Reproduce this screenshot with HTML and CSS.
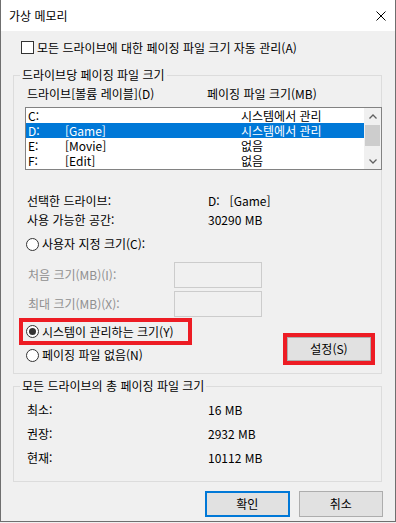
FILE: index.html
```html
<!DOCTYPE html>
<html lang="ko">
<head>
<meta charset="utf-8">
<title>가상 메모리</title>
<link rel="stylesheet" href="styles.css">
</head>
<body>
<div class="window">
  <div class="titlebar">
    <span class="title">가상 메모리</span>
    <svg class="close" width="10" height="10" viewBox="0 0 10 10"><path d="M0.5 0.5L9.5 9.5M9.5 0.5L0.5 9.5" stroke="#000" stroke-width="1" fill="none"/></svg>
  </div>
  <div class="content">
    <div class="check-row"><span class="checkbox"></span><span class="check-label">모든 드라이브에 대한 페이징 파일 크기 자동 관리(A)</span></div>

    <fieldset class="group group-drive">
      <legend>드라이브당 페이징 파일 크기</legend>
      <div class="col-head"><span class="col-drive-h">드라이브[볼륨 레이블](D)</span><span>페이징 파일 크기(MB)</span></div>
      <div class="listbox">
        <div class="rows">
          <div class="row"><span class="c-letter">C:</span><span class="c-label"></span><span class="c-size">시스템에서 관리</span></div>
          <div class="row selected"><span class="c-letter">D:</span><span class="c-label">[Game]</span><span class="c-size">시스템에서 관리</span></div>
          <div class="row"><span class="c-letter">E:</span><span class="c-label">[Movie]</span><span class="c-size">없음</span></div>
          <div class="row"><span class="c-letter">F:</span><span class="c-label">[Edit]</span><span class="c-size">없음</span></div>
        </div>
        <div class="scrollbar">
          <div class="sb-btn"><svg width="8" height="5" viewBox="0 0 8 5"><path d="M0.5 4.5L4 1L7.5 4.5" stroke="#606060" stroke-width="1.3" fill="none"/></svg></div>
          <div class="sb-thumb"></div>
          <div class="sb-space"></div>
          <div class="sb-btn"><svg width="8" height="5" viewBox="0 0 8 5"><path d="M0.5 0.5L4 4L7.5 0.5" stroke="#606060" stroke-width="1.3" fill="none"/></svg></div>
        </div>
      </div>

      <div class="info-row first"><span class="info-label">선택한 드라이브:</span><span>D:</span><span class="vol">[Game]</span></div>
      <div class="info-row"><span class="info-label">사용 가능한 공간:</span><span>30290 MB</span></div>

      <div class="radio-row custom"><span class="radio"></span><span class="radio-label">사용자 지정 크기(C):</span></div>

      <div class="size-row first"><span class="size-label">처음 크기(MB)(I):</span><span class="size-input"></span></div>
      <div class="size-row"><span class="size-label">최대 크기(MB)(X):</span><span class="size-input"></span></div>

      <div class="bottom-row">
        <div class="radio-col">
          <div class="radio-row highlight"><span class="radio checked"></span><span class="radio-label">시스템이 관리하는 크기(Y)</span></div>
          <div class="radio-row none"><span class="radio"></span><span class="radio-label">페이징 파일 없음(N)</span></div>
        </div>
        <div class="set-wrap"><button class="btn set-btn">설정(S)</button></div>
      </div>
    </fieldset>

    <fieldset class="group group-total">
      <legend>모든 드라이브의 총 페이징 파일 크기</legend>
      <div class="total-row first"><span class="info-label">최소:</span><span>16 MB</span></div>
      <div class="total-row"><span class="info-label">권장:</span><span>2932 MB</span></div>
      <div class="total-row"><span class="info-label">현재:</span><span>10112 MB</span></div>
    </fieldset>

    <div class="buttons">
      <button class="btn ok-btn">확인</button>
      <button class="btn">취소</button>
    </div>
  </div>
</div>
</body>
</html>
```

FILE: styles.css
```css
* { box-sizing: border-box; }
html, body { margin: 0; padding: 0; background: #f0f0f0; }
body {
  font-family: "Noto Sans CJK KR", "Noto Sans", sans-serif;
  font-size: 12px;
  line-height: 16px;
  color: #000;
}
.window {
  width: 396px;
  height: 522px;
  background: #f0f0f0;
  border: 1px solid #6f6f6f;
  border-top: none;
  display: flex;
  flex-direction: column;
}
.titlebar {
  height: 31px;
  flex: none;
  background: #fff;
  display: flex;
  align-items: center;
  justify-content: space-between;
  padding: 0 9px 0 8px;
}
.title { font-size: 12px; }
.close { display: block; }

.content { padding: 0 12px; }

.check-row {
  margin-top: 9px;
  height: 15px;
  display: flex;
  align-items: center;
}
.checkbox {
  width: 13px;
  height: 13px;
  margin-left: 8px;
  border: 1px solid #333;
  background: #fff;
  flex: none;
}
.check-label { margin-left: 3px; }

.group {
  margin: 0;
  padding: 0;
  width: 369px;
  border: 1px solid #dcdcdc;
  min-width: 0;
}
.group legend {
  margin-left: 6px;
  padding: 0 2px;
  line-height: 16px;
}
.group-drive { margin-top: 12px; height: 307px; }
.group-total { margin-top: 4px; height: 104px; }

.col-head {
  margin-top: 3px;
  padding-left: 13px;
  display: flex;
}
.col-drive-h { width: 180px; flex: none; }

.listbox {
  margin-top: 5px;
  margin-left: 11px;
  width: 357px;
  height: 63px;
  border: 1px solid #828282;
  background: #fff;
  display: flex;
}
.rows { width: 338px; flex: none; }
.row {
  height: 15px;
  line-height: 15px;
  display: flex;
}
.row.selected { background: #0078d7; color: #fff; }
.c-letter { width: 39px; padding-left: 2px; flex: none; }
.c-label { width: 176px; flex: none; }
.c-size { flex: none; }

.scrollbar {
  width: 17px;
  flex: none;
  background: #f0f0f0;
  display: flex;
  flex-direction: column;
}
.sb-btn {
  height: 16px;
  display: flex;
  align-items: center;
  justify-content: center;
  flex: none;
}
.sb-btn svg { display: block; }
.sb-thumb {
  margin: 1px 1px 0 1px;
  height: 21px;
  background: #cdcdcd;
  flex: none;
}
.sb-space { flex: 1; }

.info-row { margin-top: 3px; margin-left: 13px; display: flex; }
.info-row.first { margin-top: 23px; }
.info-label { width: 181px; flex: none; }
.vol { margin-left: 10px; }

.radio-row { display: flex; align-items: center; height: 16px; }
.radio-row.custom { margin-top: 8px; margin-left: 12px; }
.radio {
  width: 13px;
  height: 13px;
  border: 1px solid #333;
  border-radius: 50%;
  background: #fff;
  flex: none;
  display: flex;
  align-items: center;
  justify-content: center;
}
.radio.checked::after {
  content: "";
  width: 7px;
  height: 7px;
  border-radius: 50%;
  background: #333;
}
.radio-label { margin-left: 3px; }

.size-row {
  margin-top: 3px;
  margin-left: 14px;
  height: 26px;
  display: flex;
  align-items: center;
  color: #8f8f8f;
}
.size-row.first { margin-top: 10px; }
.size-label { width: 146px; flex: none; }
.size-input {
  width: 88px;
  height: 26px;
  border: 1px solid #cccccc;
  background: #f0f0f0;
}

.bottom-row { display: flex; margin-top: 1px; }
.radio-col { margin-left: 5px; }
.radio-row.highlight {
  width: 173px;
  height: 27px;
  border: 4px solid #ed1c24;
  padding-left: 3px;
}
.radio-row.none { margin-top: 2px; margin-left: 7px; }

.set-wrap {
  margin-left: auto;
  margin-right: 6px;
  margin-top: 15px;
  width: 92px;
  height: 32px;
  border: 4px solid #ed1c24;
}

.btn {
  font-family: inherit;
  font-size: 12px;
  color: #000;
  background: #e1e1e1;
  border: 1px solid #adadad;
  padding: 0;
  margin: 0;
  width: 86px;
  height: 26px;
  line-height: 16px;
}
.set-btn { width: 100%; height: 100%; }
.ok-btn { border: 2px solid #0078d7; }

.total-row { margin-left: 13px; margin-top: 8px; display: flex; height: 16px; }
.total-row.first { margin-top: 8px; }

.buttons {
  margin-top: 9px;
  padding-left: 192px;
  display: flex;
  gap: 9px;
}
```
